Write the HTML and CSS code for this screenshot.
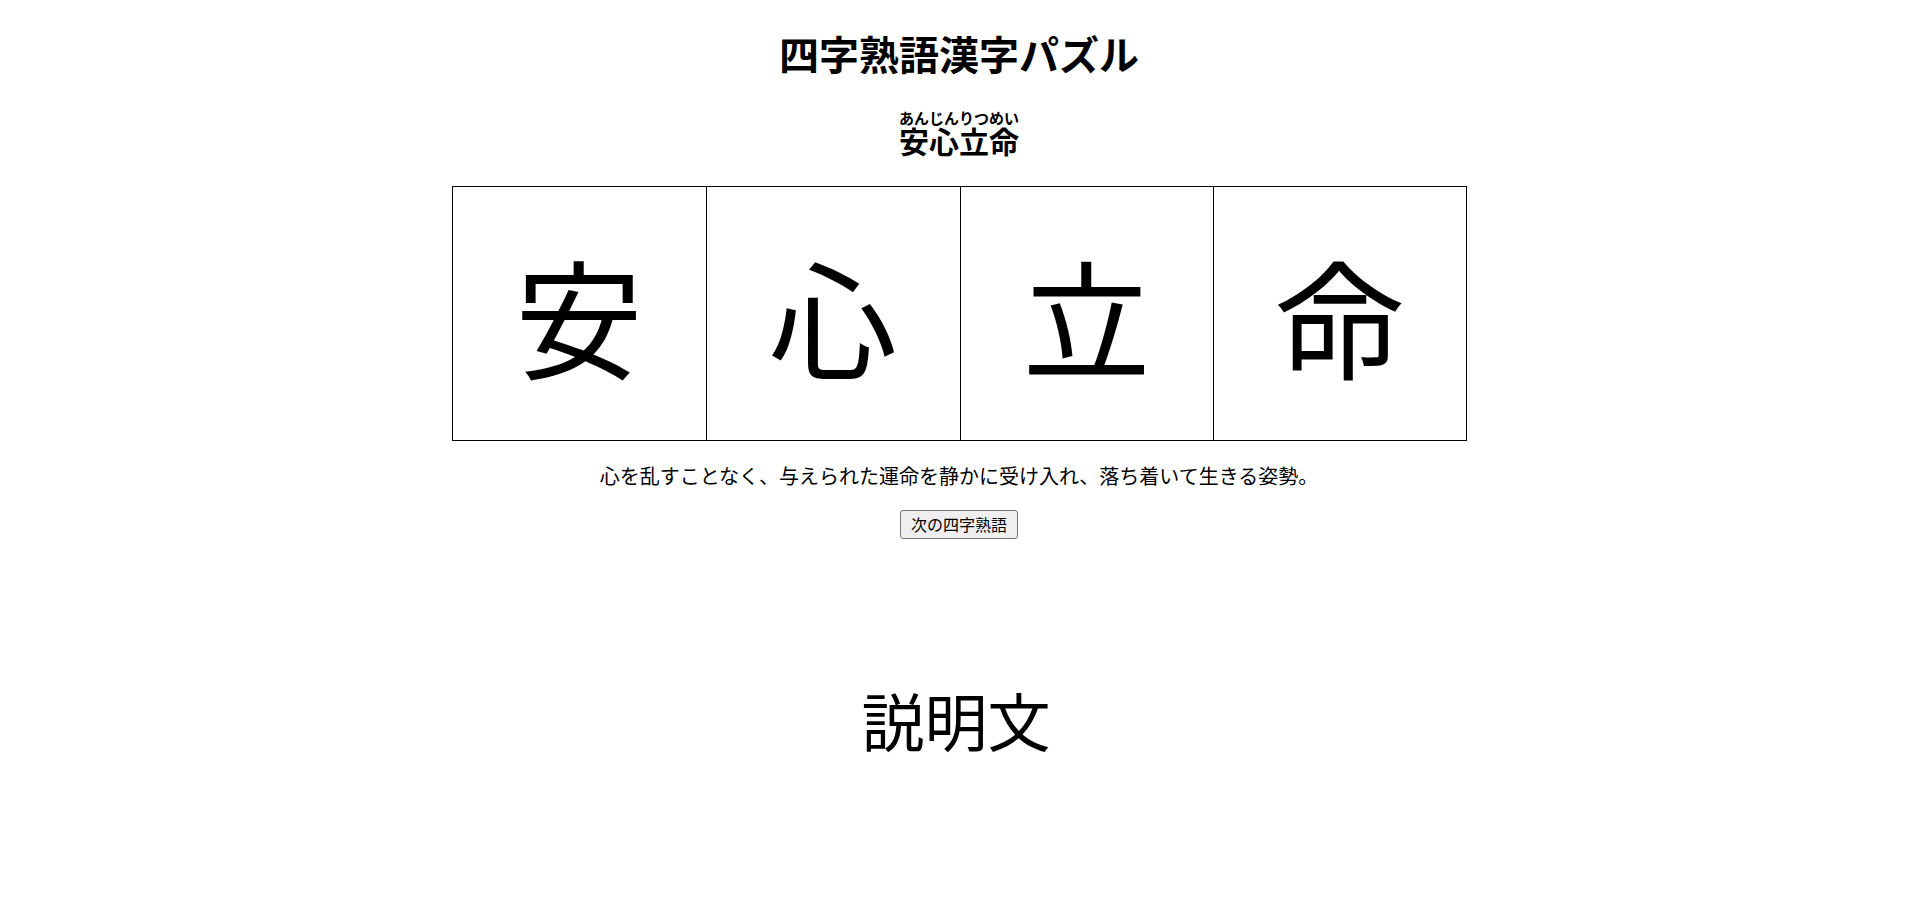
FILE: index.html
```html
<!DOCTYPE html>
<html lang="ja">
<head>
<meta charset="utf-8">
<title>四字熟語漢字パズル</title>
<link rel="stylesheet" href="styles.css">
</head>
<body>
<main class="page">
  <h1 class="title">四字熟語漢字パズル</h1>
  <h2 class="reading"><ruby>安心立命<rt>あんじんりつめい</rt></ruby></h2>
  <div class="board">
    <div class="cell">安</div>
    <div class="cell">心</div>
    <div class="cell">立</div>
    <div class="cell">命</div>
  </div>
  <p class="meaning">心を乱すことなく、与えられた運命を静かに受け入れ、落ち着いて生きる姿勢。</p>
  <button class="next" type="button">次の四字熟語</button>
  <section class="explain">説明文</section>
</main>
</body>
</html>
```

FILE: styles.css
```css
html, body {
  margin: 0;
  padding: 0;
  background: #fff;
  color: #000;
}

body {
  font-family: "Noto Sans CJK JP", "Noto Sans", sans-serif;
}

.page {
  display: flex;
  flex-direction: column;
  align-items: center;
  text-align: center;
}

.title {
  font-size: 40px;
  font-weight: 700;
  line-height: 46px;
  margin: 30px 0 0;
}

.reading {
  font-size: 30px;
  font-weight: 700;
  line-height: 34px;
  margin: 34px 0 0;
}

.reading rt {
  font-size: 15px;
  font-weight: 700;
  line-height: 1;
}

.board {
  display: grid;
  grid-template-columns: 253px 254px 253px 253px;
  border: 1px solid #000;
  margin-top: 29px;
}

.cell {
  height: 253px;
  display: flex;
  align-items: center;
  justify-content: center;
  font-size: 128px;
  line-height: 1;
  padding-top: 2px;
  box-sizing: border-box;
  border-left: 1px solid #000;
}

.cell:first-child {
  border-left: 0;
}

.meaning {
  font-size: 20px;
  line-height: 28px;
  margin: 21px 0 0;
}

.next {
  font-family: "Noto Sans CJK JP", sans-serif;
  font-size: 16px;
  line-height: 23px;
  padding: 2px 10px;
  margin-top: 20px;
  background: #efefef;
  border: 1px solid #767676;
  border-radius: 3px;
  color: #000;
}

.explain {
  font-size: 63px;
  line-height: 80px;
  margin-top: 140px;
  padding-right: 6px;
}
```
